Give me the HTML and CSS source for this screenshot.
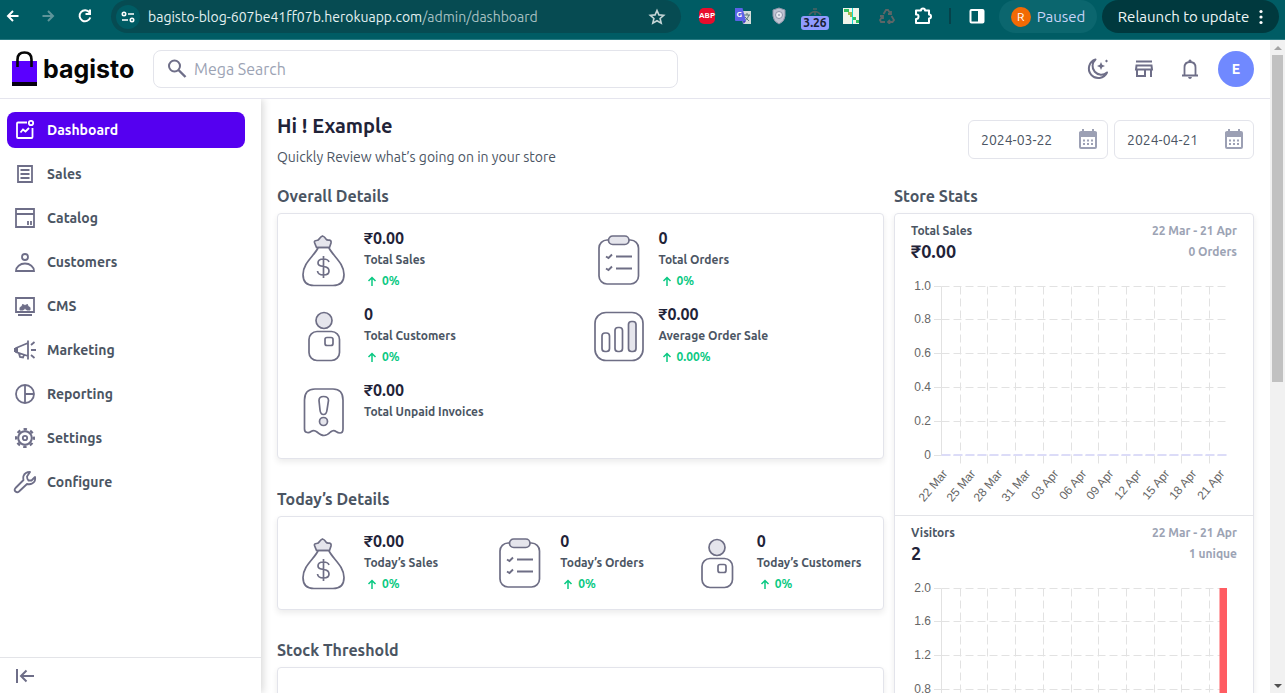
FILE: index.html
```html
<!DOCTYPE html>
<html lang="en">
<head>
<meta charset="utf-8">
<title>Dashboard</title>
<link rel="stylesheet" href="styles.css">
</head>
<body>
<svg class="defs" aria-hidden="true">
  <symbol id="bag" viewBox="0 0 60 60">
    <path d="M22.500 16.500 20.500 11.500Q20 9.500 22.500 9.500 24.500 9.500 25.500 7.500 27 5.500 28.500 5 30.500 5.500 32 8 33 9.500 35.500 9 37.500 9.500 37 12L35.500 16.500Z" fill="#e5e5ec"/>
    <path d="M22.500 16.500H35.500M24 17C20 25 9 32 9 43.500Q9 54.500 20 54.500H39Q50 54.500 50 43.500C50 32 39 25 35 17"/>
    <path d="M35 31Q34 28 29.500 28 24 28 24 32 24 35 29.500 35.500 35 36 35 40 35 44 29.500 44 24 44 23.500 40M29.500 25V47"/>
  </symbol>
  <symbol id="orders" viewBox="0 0 60 60">
    <rect x="10" y="9" width="39.500" height="44" rx="8"/>
    <rect x="19.500" y="5" width="20.500" height="8.500" rx="4.200" fill="#e5e5ec"/>
    <path d="M17 25.500 19.500 27 23 23.500M27 25.500H43M17 37.500 19.500 39 23 35.500M27 37.500H43" stroke-width="1.900"/>
  </symbol>
  <symbol id="person" viewBox="0 0 60 60">
    <circle cx="30" cy="13.500" r="8" fill="#e5e5ec"/>
    <rect x="15" y="24.500" width="30.500" height="29" rx="8"/><rect x="31" y="30.500" width="8" height="8" rx="2"/>
  </symbol>
  <symbol id="average" viewBox="0 0 60 60">
    <rect x="6" y="5.500" width="48" height="48" rx="11"/>
    <rect x="13" y="26" width="7.500" height="18.500" rx="3"/><rect x="26" y="20.500" width="7.500" height="24" rx="3"/><rect x="39.500" y="14.500" width="7.500" height="30" rx="3" fill="#e5e5ec"/>
  </symbol>
  <symbol id="invoice" viewBox="0 0 60 60">
    <path d="M10.500 46V17Q10.500 6 21 6H39Q49 6 49 17V46Q49 50 46 50 44 50 42 48.500 39.500 46.500 36.500 49 33 52.500 30 52.500 27 52.500 23 49 20 46.500 17 48.500 15 50 13.500 49.500 10.500 49.500 10.500 46Z"/>
    <path d="M29.500 13.500Q25 13.500 25 17.500L26 27Q26.500 31.500 29.500 31.500 32.500 31.500 33 27L34.500 17.500Q34.500 13.500 29.500 13.500Z"/><circle cx="29.500" cy="38.500" r="4" fill="#e5e5ec"/>
  </symbol>
  <symbol id="up" viewBox="0 0 16 16"><path d="M8 13V4.500M4.500 8 8 4.500 11.500 8" fill="none" stroke="currentColor" stroke-width="1.500"/></symbol>
  <symbol id="calendar" viewBox="0 0 20 22"><path d="M3 2H4V0H6V2H14V0H16V2H17Q19 2 19 4V18Q19 20 17 20H3Q1 20 1 18V4Q1 2 3 2ZM3 8V18H17V8Z" fill="#9ca0b4" fill-rule="evenodd"/><path d="M5 11.500H15M5 15H15" stroke="#9ca0b4" stroke-width="2" stroke-dasharray="2"/></symbol>
</svg>

<div class="browser">
  <button class="nav-btn" aria-label="Back"><svg width="16" height="16" viewBox="0 0 16 16"><path d="M13.500 8H3M8 3 3 8 8 13" stroke="#fff" stroke-width="2" fill="none"/></svg></button>
  <button class="nav-btn" aria-label="Forward"><svg width="16" height="16" viewBox="0 0 16 16"><path d="M2.500 8H13M8 3 13 8 8 13" stroke="#5e959a" stroke-width="2" fill="none"/></svg></button>
  <button class="nav-btn" aria-label="Reload"><svg width="16" height="16" viewBox="0 0 16 16"><path d="M12.500 4.500A5.500 5.500 0 1 0 13.300 9.500M13 1.500V6H8.500" stroke="#fff" stroke-width="2" fill="none"/></svg></button>
  <div class="omnibox">
    <button class="tune" aria-label="Site information"><svg width="14" height="12" viewBox="0 0 14 12"><g stroke="#fff" fill="none" stroke-width="1.600"><circle cx="3" cy="3" r="1.700"/><path d="M7 3H13M1 9H7"/><circle cx="11" cy="9" r="1.700"/></g></svg></button>
    <span class="url">bagisto-blog-607be41ff07b.herokuapp.com<span class="url-path">/admin/dashboard</span></span>
    <button class="star" aria-label="Bookmark"><svg width="18" height="18" viewBox="0 0 18 18"><path d="M9 2.500 10.900 6.900 15.700 7.300 12.100 10.500 13.200 15.200 9 12.700 4.800 15.200 5.900 10.500 2.300 7.300 7.100 6.900Z" stroke="#c6d6d7" stroke-width="1.600" fill="none"/></svg></button>
  </div>
  <div class="extensions">
    <button class="ext" aria-label="Adblock Plus"><span class="abp">ABP</span></button>
    <button class="ext" aria-label="Translate"><svg width="18" height="18" viewBox="0 0 18 18"><path d="M7 4H17V17H9Z" fill="#d5dcda"/><path d="M10 8H16M13 6V8M15 8Q14 12 10 14M11 10 15 14" stroke="#59777a" fill="none"/><path d="M1 1H8.500L12 14H2Q1 14 1 13Z" fill="#5b62e8"/><path d="M9 14H12L9.500 17Z" fill="#4534c4"/><text x="2.500" y="10" font-size="8" class="glyph">G</text></svg></button>
    <button class="ext" aria-label="Shield"><svg width="16" height="18" viewBox="0 0 16 18"><path d="M8 1 14 3V9Q14 14 8 17 2 14 2 9V3Z" fill="#bfc3d2" stroke="#8e94a8"/><circle cx="8" cy="8" r="3.500" fill="#e7e9f0" stroke="#8e94a8"/><circle cx="8" cy="8" r="1" fill="#9aa0b4"/></svg></button>
    <button class="ext timer" aria-label="Timer"><svg width="16" height="8" viewBox="0 0 16 8"><path d="M6 1H10M2 7Q8 0 14 7M8 4V7" stroke="#4f6163" stroke-width="1.500" fill="none"/></svg><span class="timer-badge">3.26</span></button>
    <button class="ext" aria-label="Map"><svg width="16" height="16" viewBox="0 0 16 16"><path d="M0 0H16V16H0Z" fill="#f1f4ea"/><path d="M1 1H6V4H1ZM10 9H13V12H10ZM13 12H16V15H13Z" fill="#33c160"/><path d="M5 4H9V9H7V7H5Z" fill="#a3b84a"/><path d="M9.500 0V16" stroke="#12d9d2"/></svg></button>
    <button class="ext" aria-label="Recycle"><svg width="16" height="16" viewBox="0 0 16 16"><path d="M4.500 6 7 2H9L11 5M12 3V6H9M12.500 8 15 12 13.500 14H9M11 12 9 14 11 16M6 14H2L1 12 3.500 8M1 8H4V11" stroke="#5d6667" stroke-width="1.800" fill="none"/></svg></button>
    <button class="ext" aria-label="Extensions"><svg width="20" height="20" viewBox="0 0 20 20"><path d="M3 4.500H8Q8 2.500 10 2.500T12 4.500H16V8.500Q18 8.500 18 10.500T16 12.500V17H3V13Q5.500 13 5.500 10.500T3 8.500Z" stroke="#fff" stroke-width="2" stroke-linejoin="round" fill="none"/></svg></button>
  </div>
  <span class="bar-divider"></span>
  <button class="ext panel" aria-label="Side panel"><svg width="16" height="16" viewBox="0 0 16 16"><rect x="1.500" y="2" width="13" height="12.500" stroke="#fff" stroke-width="2" rx="1" fill="none"/><path d="M9 2H15V14H9Z" fill="#fff"/></svg></button>
  <button class="profile"><span class="profile-dot">R</span>Paused</button>
  <button class="relaunch">Relaunch to update<svg width="4" height="16" viewBox="0 0 4 16"><g fill="#fff"><circle cx="2" cy="2.500" r="1.600"/><circle cx="2" cy="8" r="1.600"/><circle cx="2" cy="13.500" r="1.600"/></g></svg></button>
</div>

<div class="viewport">
  <div class="page">
    <header class="topbar">
      <a class="logo" href="#"><svg width="26" height="36" viewBox="0 0 26 36"><path d="M0 10H25V31H0Z" fill="#5a00ff"/><path d="M0 31H25V35H0Z" fill="#060010"/><path d="M5.500 16V8.500Q5.500 1.500 12.500 1.500T19.500 8.500V16" stroke="#060606" stroke-width="2.600" fill="none"/></svg><span>bagisto</span></a>
      <label class="search"><svg width="20" height="20" viewBox="0 0 20 20"><circle cx="7.500" cy="7" r="5.500" stroke="#6e6e88" stroke-width="2" fill="none"/><path d="M11.500 11 18.500 18" stroke="#6e6e88" stroke-width="2.400"/></svg><input type="text" placeholder="Mega Search" aria-label="Mega Search"></label>
      <div class="actions">
        <button class="icon-btn" aria-label="Dark mode"><svg width="24" height="24" viewBox="0 0 24 24"><path d="M9.500 2.500A9.500 9.500 0 1 0 21 15.500 8.500 8.500 0 0 1 9.500 2.500Z" stroke="#6e6e88" stroke-width="2" stroke-linejoin="round" fill="none"/><path d="M15 5 16.200 7.800 19 9 16.200 10.200 15 13 13.800 10.200 11 9 13.800 7.800ZM20.500 2.500 22 4 20.500 5.500 19 4Z" fill="#6e6e88"/></svg></button>
        <button class="icon-btn" aria-label="Visit shop"><svg width="24" height="24" viewBox="0 0 24 24"><path d="M4 4.500H20M4.500 8.500H19.500L20 12.500H4ZM5 12.500V19H13V12.500M19 12.500V20" stroke="#6e6e88" stroke-width="2" fill="none"/></svg></button>
        <button class="icon-btn" aria-label="Notifications"><svg width="24" height="24" viewBox="0 0 24 24"><path d="M4 18.500H20M6.500 18V10.500Q6.500 5 12 5T17.500 10.500V18" stroke="#6e6e88" stroke-width="1.800" fill="none"/><path d="M10.500 5V3.500Q12 1.500 13.500 3.500V5ZM10 20H14Q13.500 22 12 22T10 20Z" fill="#6e6e88"/></svg></button>
        <button class="avatar">E</button>
      </div>
    </header>
    <div class="body">
      <aside class="sidebar">
        <nav class="menu">
          <a class="menu-item active" href="#"><svg viewBox="0 0 24 24"><g fill="none" stroke="currentColor" stroke-width="1.800"><path d="M14 4.500H5Q4 4.500 4 5.500V19Q4 20 5 20H18.500Q19.500 20 19.500 19V10"/><path d="M7.500 14.500 10 11.500 12.500 13.500 16 10"/><circle cx="18" cy="5" r="2.200"/></g></svg>Dashboard</a>
          <a class="menu-item" href="#"><svg viewBox="0 0 24 24"><g fill="none" stroke="currentColor" stroke-width="1.800"><path d="M5 4H19V20H5ZM7.500 8H16.500M7.500 12H16.500M7.500 16H16.500"/></g></svg>Sales</a>
          <a class="menu-item" href="#"><svg viewBox="0 0 24 24"><g fill="none" stroke="currentColor" stroke-width="1.800"><path d="M3 3H21V21H3ZM3 8H21M15 15V19M18 15V19"/></g></svg>Catalog</a>
          <a class="menu-item" href="#"><svg viewBox="0 0 24 24"><g fill="none" stroke="currentColor" stroke-width="1.800"><circle cx="12" cy="7" r="3"/><path d="M3 21A9 7.500 0 0 1 21 21Z"/></g></svg>Customers</a>
          <a class="menu-item" href="#"><svg viewBox="0 0 24 24"><g fill="none" stroke="currentColor" stroke-width="1.800"><path d="M3 4H21V18H3ZM5 21H19"/><path d="M7 16V13.500L9 12.500 9.500 10.500 12 11.500 14.500 10.500 15 12.500 17 13.500V16H14Q12 13 10 16Z" fill="currentColor" stroke-width="1"/></g></svg>CMS</a>
          <a class="menu-item" href="#"><svg viewBox="0 0 24 24"><g fill="none" stroke="currentColor" stroke-width="1.800"><path d="M15 2.500V21.500M15 5 3 10V14L15 18M6 15.500 7 19 10 19.500 11 17M18 7 21.500 4M18 12H23M18 17 21.500 20"/><path d="M1 10H5V14H1Z" fill="currentColor" stroke="none"/></g></svg>Marketing</a>
          <a class="menu-item" href="#"><svg viewBox="0 0 24 24"><g fill="none" stroke="currentColor" stroke-width="1.800"><circle cx="12" cy="12" r="9"/><path d="M12 3V21M12 12H21"/></g></svg>Reporting</a>
          <a class="menu-item" href="#"><svg viewBox="0 0 24 24"><g fill="none" stroke="currentColor"><circle cx="12" cy="12" r="6.800" stroke-width="2"/><circle cx="12" cy="12" r="8.800" stroke-width="2.400" stroke-dasharray="3.456" stroke-dashoffset="1.728"/><circle cx="12" cy="12" r="2.200" stroke-width="1.800"/></g></svg>Settings</a>
          <a class="menu-item" href="#"><svg viewBox="0 0 24 24"><path d="M17 2Q12 2 10.500 6 10 8 10.500 10L2.500 18Q.800 20 2.500 21.500T6 21.500L14 14Q19 15 21.500 11.500 22.500 9 22 7L18.500 10.500H15.500Q14 9 14 6.500Z" fill="none" stroke="currentColor" stroke-width="1.800" stroke-linejoin="round"/></svg>Configure</a>
        </nav>
        <div class="collapse"><button aria-label="Collapse menu"><svg width="20" height="16" viewBox="0 0 20 16"><path d="M2 1V15M19 8H6M11.500 2.500 6 8 11.500 13.500" stroke="#6e6e88" stroke-width="2" fill="none"/></svg></button></div>
      </aside>
      <main class="main">
        <div class="intro">
          <div>
            <h1>Hi ! Example</h1>
            <p>Quickly Review what’s going on in your store</p>
          </div>
          <div class="dates">
            <label class="date"><input type="text" value="2024-03-22" aria-label="Start date"><svg width="20" height="22"><use href="#calendar"/></svg></label>
            <label class="date"><input type="text" value="2024-04-21" aria-label="End date"><svg width="20" height="22"><use href="#calendar"/></svg></label>
          </div>
        </div>
        <div class="columns">
          <div class="left">
            <section>
              <h2>Overall Details</h2>
              <div class="card two">
                <div class="stat"><svg><use href="#bag"/></svg><div class="stat-text"><b>₹0.00</b><span>Total Sales</span><em><svg><use href="#up"/></svg>0%</em></div></div>
                <div class="stat"><svg><use href="#orders"/></svg><div class="stat-text"><b>0</b><span>Total Orders</span><em><svg><use href="#up"/></svg>0%</em></div></div>
                <div class="stat"><svg><use href="#person"/></svg><div class="stat-text"><b>0</b><span>Total Customers</span><em><svg><use href="#up"/></svg>0%</em></div></div>
                <div class="stat"><svg><use href="#average"/></svg><div class="stat-text"><b>₹0.00</b><span>Average Order Sale</span><em><svg><use href="#up"/></svg>0.00%</em></div></div>
                <div class="stat"><svg><use href="#invoice"/></svg><div class="stat-text"><b>₹0.00</b><span>Total Unpaid Invoices</span></div></div>
              </div>
            </section>
            <section>
              <h2>Today’s Details</h2>
              <div class="card three">
                <div class="stat"><svg><use href="#bag"/></svg><div class="stat-text"><b>₹0.00</b><span>Today’s Sales</span><em><svg><use href="#up"/></svg>0%</em></div></div>
                <div class="stat"><svg><use href="#orders"/></svg><div class="stat-text"><b>0</b><span>Today’s Orders</span><em><svg><use href="#up"/></svg>0%</em></div></div>
                <div class="stat"><svg><use href="#person"/></svg><div class="stat-text"><b>0</b><span>Today’s Customers</span><em><svg><use href="#up"/></svg>0%</em></div></div>
              </div>
            </section>
            <section>
              <h2>Stock Threshold</h2>
              <div class="card stock"></div>
            </section>
          </div>
          <section class="right">
            <h2>Store Stats</h2>
            <div class="stats-card">
              <div class="chart-block">
                <div class="chart-head"><div><h3>Total Sales</h3><strong>₹0.00</strong></div><div class="chart-meta"><span>22 Mar - 21 Apr</span><span>0 Orders</span></div></div>
                <svg class="chart" viewBox="0 0 326 238" data-max="1" data-kind="line"></svg>
              </div>
              <div class="chart-block">
                <div class="chart-head"><div><h3>Visitors</h3><strong>2</strong></div><div class="chart-meta"><span>22 Mar - 21 Apr</span><span>1 unique</span></div></div>
                <svg class="chart" viewBox="0 0 326 238" data-max="2" data-kind="bar"></svg>
              </div>
            </div>
          </section>
        </div>
      </main>
    </div>
  </div>
  <div class="scrollbar"><span class="arrow-up"></span><span class="thumb"></span><span class="arrow-down"></span></div>
</div>
<script src="chart.js"></script>
</body>
</html>
```
FILE: chart.js
```javascript
const days = ["22 Mar", "25 Mar", "28 Mar", "31 Mar", "03 Apr", "06 Apr", "09 Apr", "12 Apr", "15 Apr", "18 Apr", "21 Apr"];
const left = 30.5, right = 316, top_ = 17.5, height = 169;

document.querySelectorAll(".chart").forEach((svg) => {
  const max = Number(svg.dataset.max);
  let out = "";
  for (let i = 0; i <= 5; i++) {
    const y = Math.floor(top_ + (height * i) / 5 - 0.5) + 0.5;
    const value = i === 5 ? "0" : (max * (5 - i) / 5).toFixed(1);
    out += `<path class="tick" d="M23 ${y}H${left}"/><path class="grid" d="M${left} ${y}H${right}"/>`;
    out += `<text class="label" x="20" y="${y + 3.5}" text-anchor="end">${value}</text>`;
  }
  out += `<path class="tick" d="M${left} ${top_}V${top_ + height}"/>`;
  days.forEach((day, i) => {
    if (i > 0) {
      const x = Math.round(21 + i * 27.7) + 0.5;
      out += `<path class="grid" d="M${x} ${top_}V${top_ + height}"/><path class="tick" d="M${x} ${top_ + height}v8"/>`;
    }
    const lx = Math.round(37 + i * 27.7);
    out += `<text class="label" text-anchor="end" transform="translate(${lx} 205) rotate(-50)">${day}</text>`;
  });
  if (svg.dataset.kind === "line") {
    out += `<path d="M${left} 186H${right}" stroke="#dcdcf8" stroke-width="2" stroke-dasharray="9 3"/>`;
  } else {
    out += `<rect x="308.5" y="17" width="7.500" height="169.500" fill="#ff5c62"/>`;
  }
  svg.innerHTML = out;
});
```
FILE: styles.css
```css
* { box-sizing: border-box; }
body {
  margin: 0;
  height: 100vh;
  display: flex;
  flex-direction: column;
  overflow: hidden;
  font-family: Ubuntu, "Noto Sans", sans-serif;
  font-size: 14px;
  color: #4b5563;
  background: #fff;
}
button { border: 0; padding: 0; background: none; font: inherit; color: inherit; display: flex; align-items: center; justify-content: center; }
a { color: inherit; text-decoration: none; }
h1, h2, h3, p { margin: 0; }
input { border: 0; outline: 0; padding: 0; background: none; font: inherit; color: inherit; min-width: 0; width: 100%; }
svg { flex: none; }
.defs { display: none; }

.browser { height: 40px; flex: none; display: flex; align-items: flex-start; background: #005c64; border-bottom: 1px solid #287a82; color: #e4f1f1; padding-right: 6px; }
.browser > *, .extensions > * { flex: none; }
.nav-btn { width: 36px; height: 32px; }
.nav-btn:first-child { width: 26px; }
.nav-btn:nth-child(2) { width: 44px; }
.nav-btn:nth-child(3) { width: 30px; }
.browser .omnibox { flex: 1; min-width: 0; margin-left: 11px; height: 33px; display: flex; align-items: center; border-radius: 17px; background: #064b52; padding: 0 15px 0 5px; }
.tune { width: 24px; height: 24px; border-radius: 50%; background: #005c64; margin-right: 8px; }
.url { flex: 1; white-space: nowrap; overflow: hidden; }
.url-path { color: #a8c0c2; }
.extensions { display: flex; margin-left: 8px; }
.ext { width: 36px; height: 32px; }
.abp { background: #e80d2c; color: #fff; font-size: 8px; font-weight: 700; width: 16px; height: 16px; line-height: 16px; border-radius: 5px; }
.glyph { fill: #fff; font-weight: 700; }
.timer { flex-direction: column; justify-content: flex-end; }
.timer-badge { background: #8f9bff; color: #172033; font-weight: 700; font-size: 12px; line-height: 14px; padding: 0 2px; border-radius: 3px; }
.ext.timer { height: 30px; }
.bar-divider { width: 2px; height: 16px; margin: 8px 8px 0; background: #06424a; }
.panel { width: 36px; }
.profile { width: 98px; height: 33px; margin: 0 5px 0 4px; gap: 6px; border-radius: 17px; background: #0b666e; color: #c8d4f8; font-size: 15px; }
.profile-dot { width: 20px; height: 20px; line-height: 20px; border-radius: 50%; background: #f26a05; color: #fff; font-size: 12px; }
.relaunch { width: 177px; height: 33px; gap: 10px; border-radius: 17px; background: #00393e; color: #eef6f6; font-size: 15px; white-space: nowrap; }

.viewport { flex: 1; min-height: 0; display: flex; }
.page { flex: 1; min-width: 0; display: flex; flex-direction: column; }
.scrollbar { width: 15px; flex: none; display: flex; flex-direction: column; align-items: center; background: #f1f1f1; }
.arrow-up, .arrow-down { border: 4px solid transparent; border-top-width: 0; border-bottom: 4px solid #a3a3a3; margin: 6px 0 5px; }
.arrow-down { border-width: 4px 4px 0; border-color: #505050 transparent transparent; margin: auto 0 5px; }
.thumb { width: 11px; height: 50%; background: #c1c1c1; }

.topbar { flex: none; height: 59px; display: flex; align-items: center; padding: 0 16px 0 12px; border-bottom: 1px solid #e5e5ee; }
.logo { width: 125px; flex: none; display: flex; align-items: center; gap: 5px; color: #060606; font: 700 25px Inter, sans-serif; }
.search { width: 525px; height: 38px; display: flex; align-items: center; gap: 7px; margin-left: 16px; padding: 0 13px; border: 1px solid #e3e4eb; border-radius: 8px; font-size: 16px; }
.search input::placeholder { color: #9ca3b4; opacity: 1; }
.actions { margin-left: auto; display: flex; align-items: center; gap: 10px; }
.icon-btn { width: 36px; height: 36px; }
.avatar { width: 36px; height: 36px; border-radius: 50%; background: #7089ff; color: #fff; font-weight: 600; }

.body { flex: 1; min-height: 0; display: flex; }
.sidebar { width: 261px; flex: none; display: flex; flex-direction: column; box-shadow: 2px 0 8px rgba(0, 0, 0, .16); clip-path: inset(0 -12px 0 0); }
.menu { flex: 1; display: flex; flex-direction: column; gap: 8px; padding: 13px 16px 0 7px; }
.menu-item { height: 36px; display: flex; align-items: center; gap: 10px; padding-left: 6px; border-radius: 8px; font-weight: 600; }
.menu-item svg { width: 24px; height: 24px; color: #6e6e88; }
.menu-item.active { background: #5500f0; color: #fff; }
.menu-item.active svg { color: #fff; }
.collapse { height: 36px; padding: 0 15px; display: flex; align-items: center; border-top: 1px solid #e3e4e8; }

.main { flex: 1; min-width: 0; overflow-y: auto; scrollbar-width: none; padding: 13px 16px 16px; }
.intro { display: flex; justify-content: space-between; align-items: flex-start; height: 72px; }
h1 { font-size: 20px; line-height: 28px; color: #1f2338; }
.intro p { line-height: 20px; margin-top: 7px; }
.dates { display: flex; gap: 6px; margin-top: 8px; }
.date { width: 140px; height: 39px; display: flex; align-items: center; gap: 8px; padding: 0 9px 0 12px; border: 1px solid #e3e4eb; border-radius: 6px; }
.columns { display: flex; gap: 10px; }
.left { flex: 1; min-width: 0; display: flex; flex-direction: column; gap: 28px; }
.right { width: 360px; flex: none; }
h2 { font-size: 16px; line-height: 24px; font-weight: 600; margin-bottom: 5px; }
.card { display: grid; gap: 16px; padding: 16px; border: 1px solid #e3e4eb; border-radius: 4px; background: #fff; box-shadow: 0 3px 6px rgba(0, 0, 0, .08); }
.two { grid-template-columns: repeat(2, 1fr); }
.three { grid-template-columns: repeat(3, 1fr); }
.stock { height: 120px; }
.stat { height: 60px; display: flex; gap: 10px; }
.stat > svg { width: 60px; height: 60px; margin-top: 1px; fill: none; stroke: #6e6e85; stroke-width: 1.7; }
.stat-text { display: flex; flex-direction: column; gap: 5px; font-size: 12px; line-height: 16px; font-weight: 600; white-space: nowrap; }
.stat-text b { font-size: 16px; line-height: 17px; color: #1f2338; font-weight: 600; }
.stat-text em { display: flex; align-items: center; gap: 2px; color: #0bc983; font-style: normal; }
.stat-text em svg { width: 16px; height: 16px; }
.stats-card { border: 1px solid #e3e4eb; border-radius: 4px; box-shadow: 0 3px 6px rgba(0, 0, 0, .08); }
.chart-block { padding: 8px 16px; }
.chart-block + .chart-block { border-top: 1px solid #e3e4e8; }
.chart-head { display: flex; justify-content: space-between; height: 47px; }
h3 { font-size: 12px; line-height: 18px; font-weight: 600; }
.chart-head strong { display: block; font-size: 18px; line-height: 22px; color: #1f2338; font-weight: 600; }
.chart-meta { display: flex; flex-direction: column; gap: 3px; text-align: right; font-size: 12px; line-height: 18px; font-weight: 600; color: #9ca3b4; }
.chart { display: block; width: 100%; height: auto; overflow: visible; }
.tick { stroke: #e2e2e2; }
.grid { stroke: #e2e2e2; stroke-dasharray: 8 4; }
.label { font: 12px "Liberation Sans", sans-serif; fill: #666; }
```
